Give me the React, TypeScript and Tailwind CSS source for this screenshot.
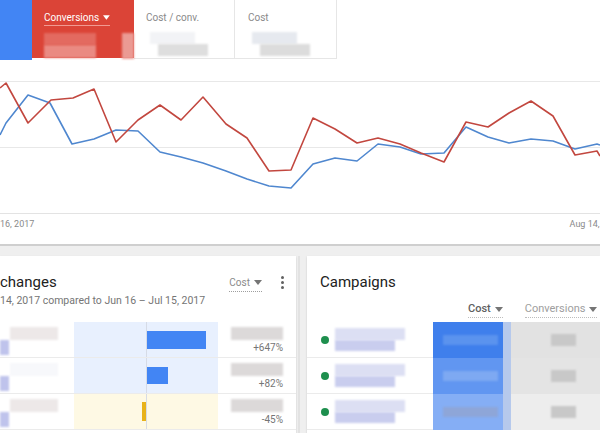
import React from "react";

const red = "0,88 6,83 28,123 51,100 73,98 94,89 116,142 138,120 160,105 181,120 203,97 226,124 247,138 269,171 291,170 313,118 335,129 357,143 378,138 400,144 421,153 444,162 466,122 488,127 509,113 531,101 553,116 575,155 597,151 600,156";
const blue = "0,135 6,123 28,95 50,103 72,144 94,139 116,130 138,131 160,152 181,157 203,163 226,171 247,179 269,186 291,188 313,164 335,158 357,161 378,144 400,147 421,154 444,153 466,127 488,137 509,143 531,139 553,141 575,149 597,144 600,145";

const changes = [
  { bg: "bg-[#e8f0fe]", side: "right", bar: "w-[59px] h-[18px] bg-[#4285f4]", val: "+647%" },
  { bg: "bg-[#e8f0fe]", side: "right", bar: "w-[21px] h-[17px] bg-[#4285f4]", val: "+82%" },
  { bg: "bg-[#fef9e4]", side: "left", bar: "w-[4px] h-[19px] bg-[#e8b21a]", val: "-45%" },
];

const campaigns = [
  { cost: "bg-[#3f7fec]", inner: "bg-[#5b93ee]", conv: "bg-[#e2e2e2]" },
  { cost: "bg-[#6196f1]", inner: "bg-[#7ea9f2]", conv: "bg-[#e4e4e4]" },
  { cost: "bg-[#85aef5]", inner: "bg-[#8ea6d8]", conv: "bg-[#ededed]" },
];

function Caret({ color = "#ffffff" }: { color?: string }) {
  return (
    <svg width="8" height="5" viewBox="0 0 8 5" className="ml-[4px]">
      <path d="M0 0h8L4 5z" fill={color} />
    </svg>
  );
}

function Blur({ className }: { className: string }) {
  return <div className={"blur-[1px] " + className} />;
}

export default function App() {
  return (
    <div className="w-[600px] h-[433px] overflow-hidden bg-white relative" style={{ fontFamily: "Roboto, 'Liberation Sans', sans-serif" }}>
      {/* scorecards */}
      <div className="flex h-[60px] items-start">
        <div className="w-[32px] h-[60px] bg-[#4285f4]" />
        <div className="w-[102px] h-[58px] bg-[#db4437] pl-[12px] pt-[11px] relative">
          <div className="flex items-center text-white text-[10px] leading-[13px] border-b border-[#f19a92] w-[66px] pb-[1px]">
            Conversions <Caret />
          </div>
          <div className="flex mt-[7px] gap-[0px]">
            <div className="flex flex-col">
              <Blur className="w-[52px] h-[12px] bg-[#e36a60]" />
              <Blur className="w-[52px] h-[13px] bg-[#ea8a82]" />
            </div>
            <div className="w-[27px]" />
            <Blur className="w-[13px] h-[26px] bg-[#eb9a93]" />
          </div>
        </div>
        <div className="w-[101px] h-[59px] border-r border-b border-[#e6e6e6] pl-[12px] pt-[11px]">
          <div className="text-[10px] leading-[13px] text-[#8a8a8a]">Cost / conv.</div>
          <div className="flex flex-col mt-[8px]">
            <Blur className="w-[45px] h-[12px] bg-[#f2f3f6] ml-[4px]" />
            <Blur className="w-[50px] h-[12px] bg-[#dedede] ml-[12px]" />
          </div>
        </div>
        <div className="w-[102px] h-[59px] border-r border-b border-[#e6e6e6] pl-[13px] pt-[11px]">
          <div className="text-[10px] leading-[13px] text-[#8a8a8a]">Cost</div>
          <div className="flex flex-col mt-[8px]">
            <Blur className="w-[45px] h-[12px] bg-[#e6e9ef] ml-[4px]" />
            <Blur className="w-[50px] h-[12px] bg-[#dcdcdc] ml-[12px]" />
          </div>
        </div>
      </div>

      {/* chart */}
      <svg width="600" height="158" viewBox="0 60 600 158" className="block">
        <line x1="0" y1="81.5" x2="600" y2="81.5" stroke="#e8e8e8" />
        <line x1="0" y1="147.5" x2="600" y2="147.5" stroke="#e8e8e8" />
        <line x1="0" y1="213.5" x2="600" y2="213.5" stroke="#e3e3e3" />
        <polyline points={blue} fill="none" stroke="#4f87cf" strokeWidth="1.6" strokeLinejoin="round" />
        <polyline points={red} fill="none" stroke="#c2473f" strokeWidth="1.6" strokeLinejoin="round" />
      </svg>
      <div className="flex justify-between h-[14px] items-center text-[9px] text-[#8a8a8a] whitespace-nowrap">
        <span>16, 2017</span>
        <span className="mr-[-22px]">Aug 14, 2017</span>
      </div>
      <div className="h-[14px] border-b-2 border-[#cfcfcf]" />

      {/* bottom cards */}
      <div className="bg-[#efefef] flex pt-[10px] h-[200px]">
        <div className="w-[296px] bg-white shadow-[0_1px_2px_rgba(0,0,0,0.15)] shrink-0">
          <div className="flex items-center h-[34px] pt-[18px] pr-[12px]">
            <div className="text-[15px] text-[#212121] leading-[18px]">changes</div>
            <div className="ml-auto flex items-center text-[10px] text-[#8a8a8a] border-b border-dotted border-[#9e9e9e] pb-[1px] mt-[2px]">
              Cost <Caret color="#757575" />
            </div>
            <div className="ml-[19px] flex flex-col gap-[2px] items-center mt-[1px]">
              <span className="w-[3px] h-[3px] rounded-full bg-[#616161]" />
              <span className="w-[3px] h-[3px] rounded-full bg-[#616161]" />
              <span className="w-[3px] h-[3px] rounded-full bg-[#616161]" />
            </div>
          </div>
          <div className="text-[10.5px] text-[#757575] leading-[14px] mt-[4px] whitespace-nowrap">14, 2017 compared to Jun 16 – Jul 15, 2017</div>
          <div className="mt-[14px]">
            {changes.map((r, i) => (
              <div key={i} className="flex h-[36px] border-b border-[#ebebeb]">
                <div className="w-[74px] relative flex flex-col pt-[5px]">
                  <div className="flex ml-[10px]">
                    <Blur className={"w-[48px] h-[13px] " + (i === 1 ? "bg-[#f7f8fb]" : "bg-[#ede8e8]")} />
                  </div>
                  <Blur className="w-[9px] h-[15px] bg-[#bfc3ec]" />
                </div>
                <div className={"w-[144px] grid grid-cols-2 " + r.bg}>
                  <div className="flex items-center justify-end">{r.side === "left" && <div className={r.bar} />}</div>
                  <div className="flex items-center justify-start border-l border-[#d6dbe6]">{r.side === "right" && <div className={r.bar} />}</div>
                </div>
                <div className="w-[78px] flex flex-col items-end pr-[13px] pt-[5px]">
                  <Blur className="w-[52px] h-[13px] bg-[#dcd9d9]" />
                  <div className="text-[10px] leading-[14px] text-[#757575] mt-[1px]">{r.val}</div>
                </div>
              </div>
            ))}
          </div>
        </div>

        <div className="w-[2px] bg-[#e2e2e2] ml-[2px]" />

        <div className="ml-[7px] flex-1 bg-white shadow-[0_1px_2px_rgba(0,0,0,0.15)]">
          <div className="pl-[13px] pt-[17px] text-[15px] text-[#212121] leading-[18px]">Campaigns</div>
          <div className="flex h-[31px] items-center pt-[6px] text-[11px]">
            <div className="ml-[161px] flex items-center text-[#5f5f5f] font-medium border-b border-dotted border-[#bdbdbd]">
              Cost <Caret color="#757575" />
            </div>
            <div className="ml-[22px] flex items-center text-[#9e9e9e] border-b border-dotted border-[#bdbdbd]">
              Conversions <Caret color="#757575" />
            </div>
          </div>
          <div>
            {campaigns.map((c, i) => (
              <div key={i} className="flex h-[36px]">
                <div className="w-[126px] flex items-center border-b border-[#ebebeb]">
                  <span className="w-[8px] h-[8px] rounded-full bg-[#1e8f4e] ml-[14px]" />
                  <div className="flex flex-col ml-[6px]">
                    <Blur className="w-[70px] h-[12px] bg-[#dcdff3]" />
                    <Blur className="w-[60px] h-[11px] bg-[#c9cdee]" />
                  </div>
                </div>
                <div className={"w-[70px] flex items-center pl-[10px] " + c.cost}>
                  <Blur className={"w-[55px] h-[10px] " + c.inner} />
                </div>
                <div className="w-[8px] bg-[#b6c9ec]" />
                <div className={"flex-1 flex items-center pl-[40px] " + c.conv}>
                  <Blur className="w-[25px] h-[12px] bg-[#c8c8c8]" />
                </div>
              </div>
            ))}
          </div>
        </div>
      </div>
    </div>
  );
}
